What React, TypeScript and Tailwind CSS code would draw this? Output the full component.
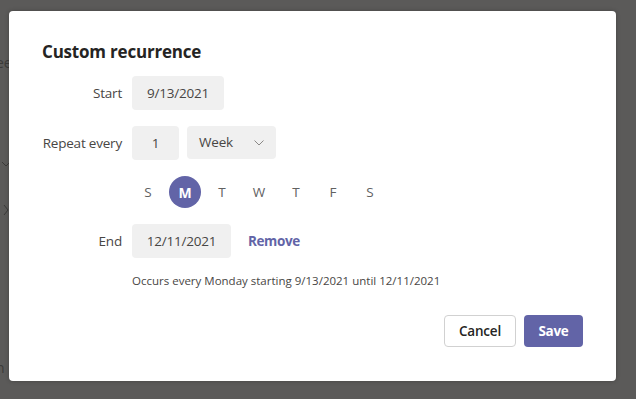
import React from "react";

const font = { fontFamily: '"Segoe UI", "Open Sans", "Noto Sans", sans-serif' };

function Field({ children, w, center = true }: { children: React.ReactNode; w: string; center?: boolean }) {
  return (
    <div className={`${w} h-[34px] rounded-[4px] bg-[#f0f0f0] flex items-center ${center ? "justify-center" : ""} text-[13.5px] tracking-[-0.2px] text-[#484644]`}>
      {children}
    </div>
  );
}

export default function App() {
  const days = ["S", "M", "T", "W", "T", "F", "S"];
  return (
    <div className="relative w-[636px] h-[399px] overflow-hidden bg-[#5b5a59] pl-[9px] pt-[11px]" style={font}>
      <div className="absolute left-[-4px] top-[52px] text-[14px] text-[#3b3a39]">ee</div>
      <div className="absolute left-[-4px] top-[357px] text-[14px] text-[#3b3a39]">n</div>
      <svg className="absolute left-[1px] top-[160px]" width="10" height="8" viewBox="0 0 10 8">
        <path d="M1 2 L5 6 L9 2" fill="none" stroke="#3b3a39" strokeWidth="1" />
      </svg>
      <svg className="absolute left-[2px] top-[204px]" width="8" height="12" viewBox="0 0 8 12">
        <path d="M2 1 L6 6 L2 11" fill="none" stroke="#3b3a39" strokeWidth="1" />
      </svg>

      <div className="relative w-[607px] h-[370px] bg-white rounded-[4px] shadow-[0_0_4px_rgba(0,0,0,0.25)] px-[33px] pt-[29px] flex flex-col">
        <div className="text-[17px] leading-[24px] tracking-[-0.2px] font-bold text-[#252423]">Custom recurrence</div>

        <div className="mt-[12px] flex items-center">
          <div className="w-[80px] text-right text-[13.5px] tracking-[-0.2px] text-[#484644]">Start</div>
          <div className="ml-[10px]">
            <Field w="w-[92px]">9/13/2021</Field>
          </div>
        </div>

        <div className="mt-[16px] flex items-center">
          <div className="w-[80px] text-right text-[13.5px] tracking-[-0.2px] text-[#484644] whitespace-nowrap">Repeat every</div>
          <div className="ml-[10px] flex gap-[8px]">
            <Field w="w-[47px]">1</Field>
            <div className="w-[89px] h-[33px] rounded-[4px] bg-[#f0f0f0] flex items-center justify-between pl-[12px] pr-[12px] text-[13.5px] tracking-[-0.2px] text-[#484644]">
              <span>Week</span>
              <svg width="10" height="6" viewBox="0 0 10 6">
                <path d="M0.5 0.5 L5 5 L9.5 0.5" fill="none" stroke="#8a8886" strokeWidth="1" />
              </svg>
            </div>
          </div>
        </div>

        <div className="mt-[16px] flex items-center pl-[90px] gap-[5px]">
          {days.map((d, i) =>
            i === 1 ? (
              <div key={i} className="w-[32px] h-[32px] rounded-full bg-[#6264a7] text-white font-bold text-[14px] flex items-center justify-center">
                {d}
              </div>
            ) : (
              <div key={i} className="w-[32px] h-[32px] flex items-center justify-center text-[13.5px] text-[#616161]">
                {d}
              </div>
            )
          )}
        </div>

        <div className="mt-[16px] flex items-center">
          <div className="w-[80px] text-right text-[13.5px] tracking-[-0.2px] text-[#484644]">End</div>
          <div className="ml-[10px]">
            <Field w="w-[99px]">12/11/2021</Field>
          </div>
          <div className="ml-[17px] text-[13.5px] tracking-[-0.4px] font-bold text-[#6264a7]">Remove</div>
        </div>

        <div className="mt-[15px] pl-[90px] text-[11.5px] leading-[16px] text-[#484644]">
          Occurs every Monday starting 9/13/2021 until 12/11/2021
        </div>

        <div className="mt-[26px] flex justify-end gap-[8px]">
          <div className="w-[72px] h-[32px] rounded-[4px] border border-[#d1d1d1] flex items-center justify-center text-[13.5px] tracking-[-0.2px] font-semibold text-[#252423]">
            Cancel
          </div>
          <div className="w-[59px] h-[32px] rounded-[4px] bg-[#6264a7] flex items-center justify-center text-[13.5px] tracking-[-0.3px] font-bold text-white">
            Save
          </div>
        </div>
      </div>
    </div>
  );
}
